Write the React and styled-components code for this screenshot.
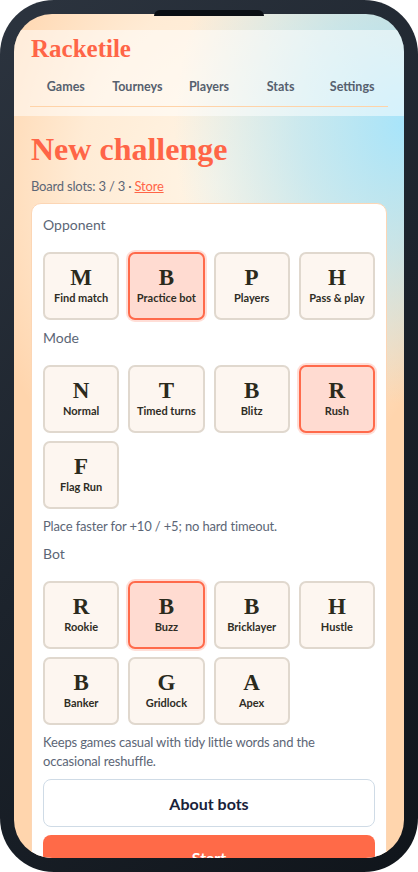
import React from "react";
import styled, { createGlobalStyle, css } from "styled-components";

const Global = createGlobalStyle`
  html, body { margin: 0; padding: 0; background: #ffffff; }
  * { box-sizing: border-box; }
`;

const SANS = `"Lato", "Noto Sans", "Liberation Sans", sans-serif`;
const SERIF = `"Liberation Serif", "DejaVu Serif", serif`;

const Frame = styled.div`
  position: relative;
  width: 418px;
  height: 872px;
  padding: 14px;
  border-radius: 54px;
  background: linear-gradient(140deg, #2c343f 0%, #1c232c 50%, #10151b 100%);
`;

const Notch = styled.div`
  position: absolute;
  top: 10px;
  left: 154px;
  width: 110px;
  height: 6px;
  border-radius: 6px 6px 0 0;
  background: #0a0e13;
  z-index: 2;
`;

const Screen = styled.div`
  width: 390px;
  height: 844px;
  border-radius: 38px;
  overflow: hidden;
  padding-top: 16px;
  background:
    radial-gradient(ellipse 230px 280px at 100% 110px, #a8e5fb 0%, rgba(168, 229, 251, 0.6) 45%, rgba(168, 229, 251, 0) 100%),
    radial-gradient(ellipse 250px 330px at 52% 170px, #fff5e6 0%, rgba(255, 245, 230, 0.7) 55%, rgba(255, 245, 230, 0) 100%),
    #ffd5ad;
`;

const Header = styled.header`
  background: rgba(255, 255, 255, 0.5);
  padding: 3px 16px 9px 16px;
`;

const Logo = styled.div`
  font-family: ${SERIF};
  font-weight: 700;
  font-size: 25px;
  line-height: 32px;
  color: #ff6547;
  padding-left: 1px;
`;

const Nav = styled.nav`
  display: grid;
  grid-template-columns: repeat(5, 1fr);
  margin-top: 12px;
  padding: 0 0 9px;
  border-bottom: 1.5px solid #ffd3a8;
`;

const NavItem = styled.a`
  font-family: ${SANS};
  font-weight: 700;
  font-size: 12.5px;
  line-height: 20px;
  color: #56606e;
  text-align: center;
  text-decoration: none;
`;

const Main = styled.main`
  padding: 13px 17px 0;
`;

const Title = styled.h1`
  margin: 0;
  font-family: ${SERIF};
  font-weight: 700;
  font-size: 32px;
  line-height: 40px;
  color: #ff6547;
`;

const Slots = styled.p`
  margin: 7px 0 7px;
  font-family: ${SANS};
  font-size: 13px;
  letter-spacing: -0.2px;
  line-height: 20px;
  color: #5c6676;
`;

const StoreLink = styled.a`
  color: #ff6547;
  text-decoration: underline;
`;

const Card = styled.section`
  background: #ffffff;
  border: 1px solid #fcd6b5;
  border-radius: 10px;
  padding: 11px 11px 16px;
  display: flex;
  flex-direction: column;
  gap: 8px;
`;

const Label = styled.div`
  font-family: ${SANS};
  font-size: 14px;
  line-height: 20px;
  color: #5c6676;
  margin-bottom: 9px;
`;

const Hint = styled.p`
  margin: 0;
  font-family: ${SANS};
  font-size: 13px;
  letter-spacing: -0.15px;
  line-height: 19px;
  color: #5c6676;
`;

const Grid = styled.div`
  display: grid;
  grid-template-columns: repeat(4, 1fr);
  gap: 8px 9px;
`;

const Tile = styled.button`
  height: 68px;
  border-radius: 7px;
  border: 2px solid #e0d8ce;
  background: #fdf6f0;
  display: flex;
  flex-direction: column;
  align-items: center;
  justify-content: center;
  gap: 2px;
  padding: 0 0 1px;
  cursor: pointer;
  ${(p) =>
    p.$active &&
    css`
      background: #ffdbd1;
      border-color: #ff6a4b;
      box-shadow: 0 0 0 2px rgba(255, 106, 75, 0.22);
    `}
`;

const TileLetter = styled.span`
  font-family: ${SERIF};
  font-weight: 700;
  font-size: 23px;
  line-height: 22px;
  color: #2b2a1c;
`;

const TileName = styled.span`
  font-family: ${SANS};
  font-weight: 700;
  font-size: 11px;
  line-height: 14px;
  color: #2f2d25;
  white-space: nowrap;
`;

const Button = styled.button`
  width: 100%;
  border-radius: 8px;
  font-family: ${SANS};
  font-weight: 700;
  font-size: 16px;
  cursor: pointer;
  ${(p) =>
    p.$primary
      ? css`
          height: 44px;
          background: #ff6a48;
          border: none;
          color: #ffffff;
        `
      : css`
          height: 48px;
          background: #ffffff;
          border: 1.5px solid #cfdbe6;
          color: #18223a;
        `}
`;

const opponents = [
  ["M", "Find match"],
  ["B", "Practice bot"],
  ["P", "Players"],
  ["H", "Pass & play"],
];
const modes = [
  ["N", "Normal"],
  ["T", "Timed turns"],
  ["B", "Blitz"],
  ["R", "Rush"],
  ["F", "Flag Run"],
];
const bots = [
  ["R", "Rookie"],
  ["B", "Buzz"],
  ["B", "Bricklayer"],
  ["H", "Hustle"],
  ["B", "Banker"],
  ["G", "Gridlock"],
  ["A", "Apex"],
];

function TileGrid({ items, active }) {
  return (
    <Grid>
      {items.map(([l, n]) => (
        <Tile key={n} $active={n === active}>
          <TileLetter>{l}</TileLetter>
          <TileName>{n}</TileName>
        </Tile>
      ))}
    </Grid>
  );
}

export default function App() {
  return (
    <>
      <Global />
      <Frame>
        <Notch />
        <Screen>
          <Header>
            <Logo>Racketile</Logo>
            <Nav>
              {["Games", "Tourneys", "Players", "Stats", "Settings"].map((n) => (
                <NavItem key={n}>{n}</NavItem>
              ))}
            </Nav>
          </Header>
          <Main>
            <Title>New challenge</Title>
            <Slots>
              Board slots: 3 / 3 · <StoreLink>Store</StoreLink>
            </Slots>
            <Card>
              <Label>Opponent</Label>
              <TileGrid items={opponents} active="Practice bot" />
              <Label>Mode</Label>
              <TileGrid items={modes} active="Rush" />
              <Hint>Place faster for +10 / +5; no hard timeout.</Hint>
              <Label>Bot</Label>
              <TileGrid items={bots} active="Buzz" />
              <Hint>Keeps games casual with tidy little words and the occasional reshuffle.</Hint>
              <Button>About bots</Button>
              <Button $primary>Start</Button>
            </Card>
          </Main>
        </Screen>
      </Frame>
    </>
  );
}
